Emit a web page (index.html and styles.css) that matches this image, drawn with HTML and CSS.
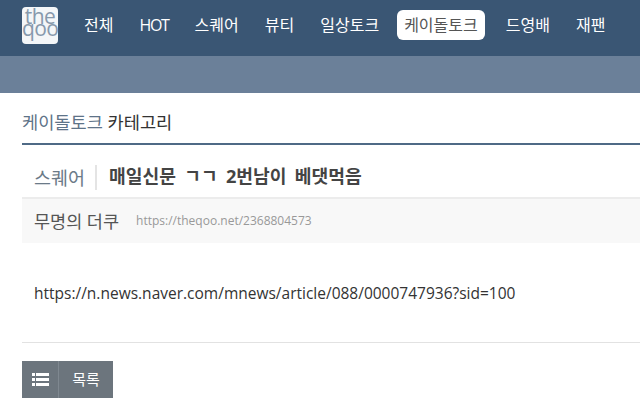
FILE: index.html
```html
<!DOCTYPE html>
<html lang="ko">

<head>
    <meta charset="UTF-8">
    <title>케이돌토크 카테고리</title>
    <link rel="stylesheet" href="styles.css">
</head>

<body>
    <div class="nav">
        <div class="logo">the<br>qoo</div>
        <a class="menu">전체</a>
        <a class="menu hot">HOT</a>
        <a class="menu">스퀘어</a>
        <a class="menu">뷰티</a>
        <a class="menu">일상토크</a>
        <a class="menu active">케이돌토크</a>
        <a class="menu">드영배</a>
        <a class="menu">재팬</a>
    </div>
    <div class="subnav"></div>
    <div class="content">
        <h2 class="board-title"><span class="board-name">케이돌토크</span> 카테고리</h2>
        <div class="title-row">
            <span class="cate">스퀘어</span>
            <span class="title">매일신문 ㄱㄱ 2번남이 베댓먹음</span>
        </div>
        <div class="info-row">
            <span class="author">무명의 더쿠</span>
            <span class="link">https://theqoo.net/2368804573</span>
        </div>
        <div class="article">https://n.news.naver.com/mnews/article/088/0000747936?sid=100</div>
        <div class="buttons">
            <a class="list-btn">
                <span class="list-icon">
                    <svg width="17" height="13" viewBox="0 0 17 13">
                        <rect x="0" y="0" width="3" height="3" fill="#fff"/>
                        <rect x="4" y="0" width="13" height="3" fill="#fff"/>
                        <rect x="0" y="5" width="3" height="3" fill="#fff"/>
                        <rect x="4" y="5" width="13" height="3" fill="#fff"/>
                        <rect x="0" y="10" width="3" height="3" fill="#fff"/>
                        <rect x="4" y="10" width="13" height="3" fill="#fff"/>
                    </svg>
                </span>
                <span class="list-text">목록</span>
            </a>
        </div>
    </div>
</body>

</html>
```
FILE: styles.css
```css
* {
  box-sizing: border-box;
}

html, body {
  overflow: hidden;
}

body {
  margin: 0;
  background: #fff;
  color: #333;
  font: normal 16px/1.5 "Open Sans", "Noto Sans CJK KR", sans-serif;
}

.nav {
  height: 56px;
  padding: 7px 0 0 22px;
  display: flex;
  align-items: flex-start;
  background: #3a5674;
}

.logo {
  width: 36px;
  height: 37px;
  margin-right: 19px;
  padding-top: 3px;
  border-radius: 4px;
  background: #f4f6f8;
  color: #8799ac;
  font: 400 21px/12px "Open Sans", sans-serif;
  letter-spacing: -.6px;
  text-align: center;
}

.menu {
  height: 30px;
  margin: 3px 12px 0 0;
  padding: 0 7px;
  color: #fff;
  font-size: 16px;
  line-height: 30px;
  white-space: nowrap;
}

.menu.hot {
  letter-spacing: -1.3px;
}

.menu.active {
  margin: 3px 14px 0 -1px;
  border-radius: 6px;
  background: #fff;
  color: #555;
}

.subnav {
  height: 37px;
  background: #6b8099;
}

.content {
  padding-left: 22px;
}

.board-title {
  height: 52px;
  margin: 0;
  border-bottom: 2px solid #4f6a86;
  color: #333;
  font-size: 17.6px;
  font-weight: normal;
  line-height: 58px;
}

.board-name {
  color: #5e7388;
}

.title-row {
  height: 54px;
  padding: 12px 0 0 12px;
  display: flex;
  align-items: center;
  border-bottom: 2px solid #ececec;
}

.cate {
  padding-right: 10px;
  border-right: 2px solid #e4e4e4;
  color: #6b7a88;
  font-size: 18.5px;
  line-height: 25px;
}

.title {
  margin-left: 12px;
  color: #444;
  font-size: 18.2px;
  font-weight: bold;
  word-spacing: 3.5px;
}

.info-row {
  height: 44px;
  padding-left: 12px;
  display: flex;
  align-items: center;
  background: #f8f8f8;
}

.author {
  color: #555;
  font-size: 17.5px;
}

.link {
  margin-left: 17px;
  color: #999;
  font-size: 12px;
}

.article {
  height: 100px;
  padding: 38px 0 0 12px;
  border-bottom: 1px solid #e2e2e2;
  color: #333;
  font-size: 15.5px;
  line-height: 24px;
  white-space: nowrap;
}

.buttons {
  padding-top: 18px;
}

.list-btn {
  height: 37px;
  display: inline-flex;
  background: #6c757d;
  color: #fff;
  font-size: 15px;
  line-height: 37px;
}

.list-icon {
  width: 37px;
  display: flex;
  align-items: center;
  justify-content: center;
  border-right: 1px solid #7f8890;
}

.list-text {
  width: 54px;
  text-align: center;
}
```
